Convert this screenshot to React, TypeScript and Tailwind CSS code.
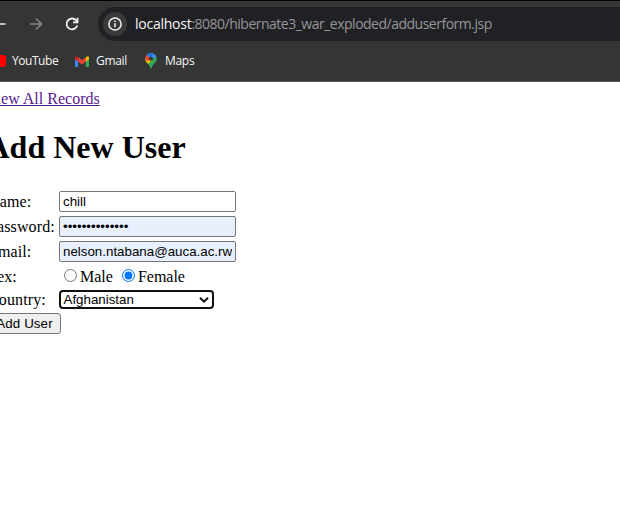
import React from "react";

const rowLabel = "w-[72px] shrink-0 pl-[1px] text-[16px] leading-[18px] tracking-[0.12px] whitespace-nowrap";
const field =
  "h-[21px] w-[177px] rounded-[2px] border border-[#767676] px-[3px] font-['Liberation_Sans',Arial,sans-serif] text-[13.333px] leading-[19px] text-black outline-none";

function Toolbar() {
  return (
    <div className="flex h-[40px] items-center pt-[6px]">
      <svg className="-ml-[9px] h-[16px] w-[16px] shrink-0" viewBox="0 0 16 16" fill="none" stroke="#e8e8e8" strokeWidth="1.7">
        <path d="M14.5 8H3M8 2.5 2.5 8 8 13.5" />
      </svg>
      <svg className="ml-[21px] h-[16px] w-[16px] shrink-0" viewBox="0 0 16 16" fill="none" stroke="#858585" strokeWidth="1.7">
        <path d="M2 8H13M8 2.5 13.5 8 8 13.5" />
      </svg>
      <svg className="ml-[20px] h-[16px] w-[16px] shrink-0" viewBox="0 0 16 16" fill="none" stroke="#f1f1f1" strokeWidth="1.8">
        <path d="M13.2 9.4A5.4 5.4 0 1 1 12.1 4.4L13.5 6" />
        <path d="M13.5 1.8V6.3H9" />
      </svg>
      <div className="ml-[18px] flex h-[34px] flex-1 items-center rounded-l-full bg-[#202124] pl-[5px]">
        <div className="flex h-[24px] w-[24px] items-center justify-center rounded-full bg-[#3a3a3b]">
          <svg className="h-[14px] w-[14px]" viewBox="0 0 14 14" fill="none" stroke="#f1f1f1" strokeWidth="1.5">
            <circle cx="7" cy="7" r="6.1" />
            <path d="M7 6.2V10.3M7 3.6V5.1" />
          </svg>
        </div>
        <div className="ml-[8px] whitespace-nowrap font-['Open_Sans','Noto_Sans',sans-serif] text-[14px] leading-[20px] tracking-[-0.5px] text-[#969798]">
          <span className="tracking-[-0.25px] text-[#f5f5f5]">localhost</span>:8080/hibernate3_war_exploded/adduserform.jsp
        </div>
      </div>
    </div>
  );
}

function Bookmarks() {
  return (
    <div className="flex h-[40px] items-center font-['Open_Sans','Noto_Sans',sans-serif] text-[12px] leading-[16px] tracking-[-0.45px] text-[#f5f5f5]">
      <svg className="-ml-[10px] h-[12px] w-[16px] shrink-0" viewBox="0 0 16 12">
        <rect width="16" height="12" rx="3" fill="#f00" />
        <path d="M6.5 3.5 10.5 6 6.5 8.5Z" fill="#fff" />
      </svg>
      <span className="ml-[6px] w-[63px]">YouTube</span>
      <svg className="h-[11px] w-[14px] shrink-0" viewBox="0 0 14 11">
        <path d="M0 2V10Q0 11 1 11H3.2V4.6Z" fill="#4285f4" />
        <path d="M14 2V10Q14 11 13 11H10.8V4.6Z" fill="#34a853" />
        <path d="M3 1.2 7 4.1 11 1.2V5.6L7 8.6 3 5.6Z" fill="#ea4335" />
        <path d="M10.8 1.4 11.6.7Q14-.6 14 2V3.2L10.8 5.6Z" fill="#fbbc04" />
        <path d="M3.2 1.4 2.4.7Q0-.6 0 2V3.2L3.2 5.6Z" fill="#c5221f" />
      </svg>
      <span className="ml-[7px] w-[49px] tracking-[-0.3px]">Gmail</span>
      <svg className="h-[16px] w-[12px] shrink-0" viewBox="0 0 12 16">
        <clipPath id="pin">
          <path d="M6 0A5.7 5.7 0 0 0 .3 5.7C.3 10 4.4 10.5 5.3 15Q6 16.5 6.7 15C7.6 10.5 11.7 10 11.7 5.7A5.7 5.7 0 0 0 6 0Z" />
        </clipPath>
        <g clipPath="url(#pin)">
          <path d="M0 0H12V16H0Z" fill="#34a853" />
          <path d="M0 5V12L3 11 7.5 6 4 5Z" fill="#fbbc04" />
          <path d="M0 1 3 1.5 6 5.7 3 8 0 6.5Z" fill="#ea4335" />
          <path d="M1.5 1.5 6 5.7 8 0H1Z" fill="#1a73e8" />
          <path d="M8 0H12V4L6 5.7Z" fill="#4285f4" />
        </g>
        <circle cx="6" cy="5.7" r="1.9" fill="#353535" />
      </svg>
      <span className="ml-[8px] tracking-[-0.3px]">Maps</span>
    </div>
  );
}

export default function App() {
  return (
    <div className="h-[507px] w-[620px] overflow-hidden bg-white font-['Liberation_Serif','Times_New_Roman',serif] text-black">
      <header className="h-[82px] border-t border-b border-t-black border-b-[#5b5b5b] bg-[#353535]">
        <Toolbar />
        <Bookmarks />
      </header>
      <main className="-ml-[13px] pt-[8px]">
        <a className="-ml-[1px] block w-fit text-[16px] leading-[18px] text-[#551a8b] underline">View All Records</a>
        <h1 className="mt-[21px] -ml-[0.5px] text-[32px] leading-[37px] font-bold">Add New User</h1>
        <form className="mt-[25px] flex flex-col">
          <div className="flex h-[25px]">
            <label className={rowLabel + " pt-[2px]"}>Name:</label>
            <input className={field} defaultValue="chill" />
          </div>
          <div className="flex h-[25px]">
            <label className={rowLabel + " pt-[2px]"}>Password:</label>
            <input type="password" className={field + " bg-[#e8f0fe]"} defaultValue="abcdefghijklmn" />
          </div>
          <div className="flex h-[25px]">
            <label className={rowLabel + " pt-[2px]"}>Email:</label>
            <input className={field + " bg-[#e8f0fe]"} defaultValue="nelson.ntabana@auca.ac.rw" />
          </div>
          <div className="flex h-[24px] text-[16px] leading-[18px]">
            <span className={rowLabel + " pt-[2px]"}>Sex:</span>
            <label className="flex pt-[2px] pl-[5px]">
              <input type="radio" name="sex" className="mt-[1px] mr-[3px] h-[13px] w-[13px]" />
              Male
            </label>
            <label className="flex pt-[2px] pl-[9px]">
              <input type="radio" name="sex" defaultChecked className="mt-[1px] mr-[3px] h-[13px] w-[13px]" />
              Female
            </label>
          </div>
          <div className="flex h-[23px]">
            <label className={rowLabel + " pt-[1px]"}>Country:</label>
            <div className="flex h-[19px] w-[155px] items-center justify-between rounded-[4px] border-2 border-[#101010] pr-[3px] pl-[2.5px] font-['Liberation_Sans',Arial,sans-serif] text-[13.333px] leading-[15px]">
              <span>Afghanistan</span>
              <svg className="h-[6px] w-[10px]" viewBox="0 0 10 6" fill="none" stroke="#101010" strokeWidth="2">
                <path d="M1 .8 5 4.6 9 .8" />
              </svg>
            </div>
          </div>
          <button type="button" className="h-[21px] w-[74px] rounded-[3px] border border-[#767676] bg-[#efefef] pl-[1px] text-center font-['Liberation_Sans',Arial,sans-serif] text-[13.333px] leading-[19px] tracking-[0.1px] whitespace-nowrap">
            Add User
          </button>
        </form>
      </main>
    </div>
  );
}
